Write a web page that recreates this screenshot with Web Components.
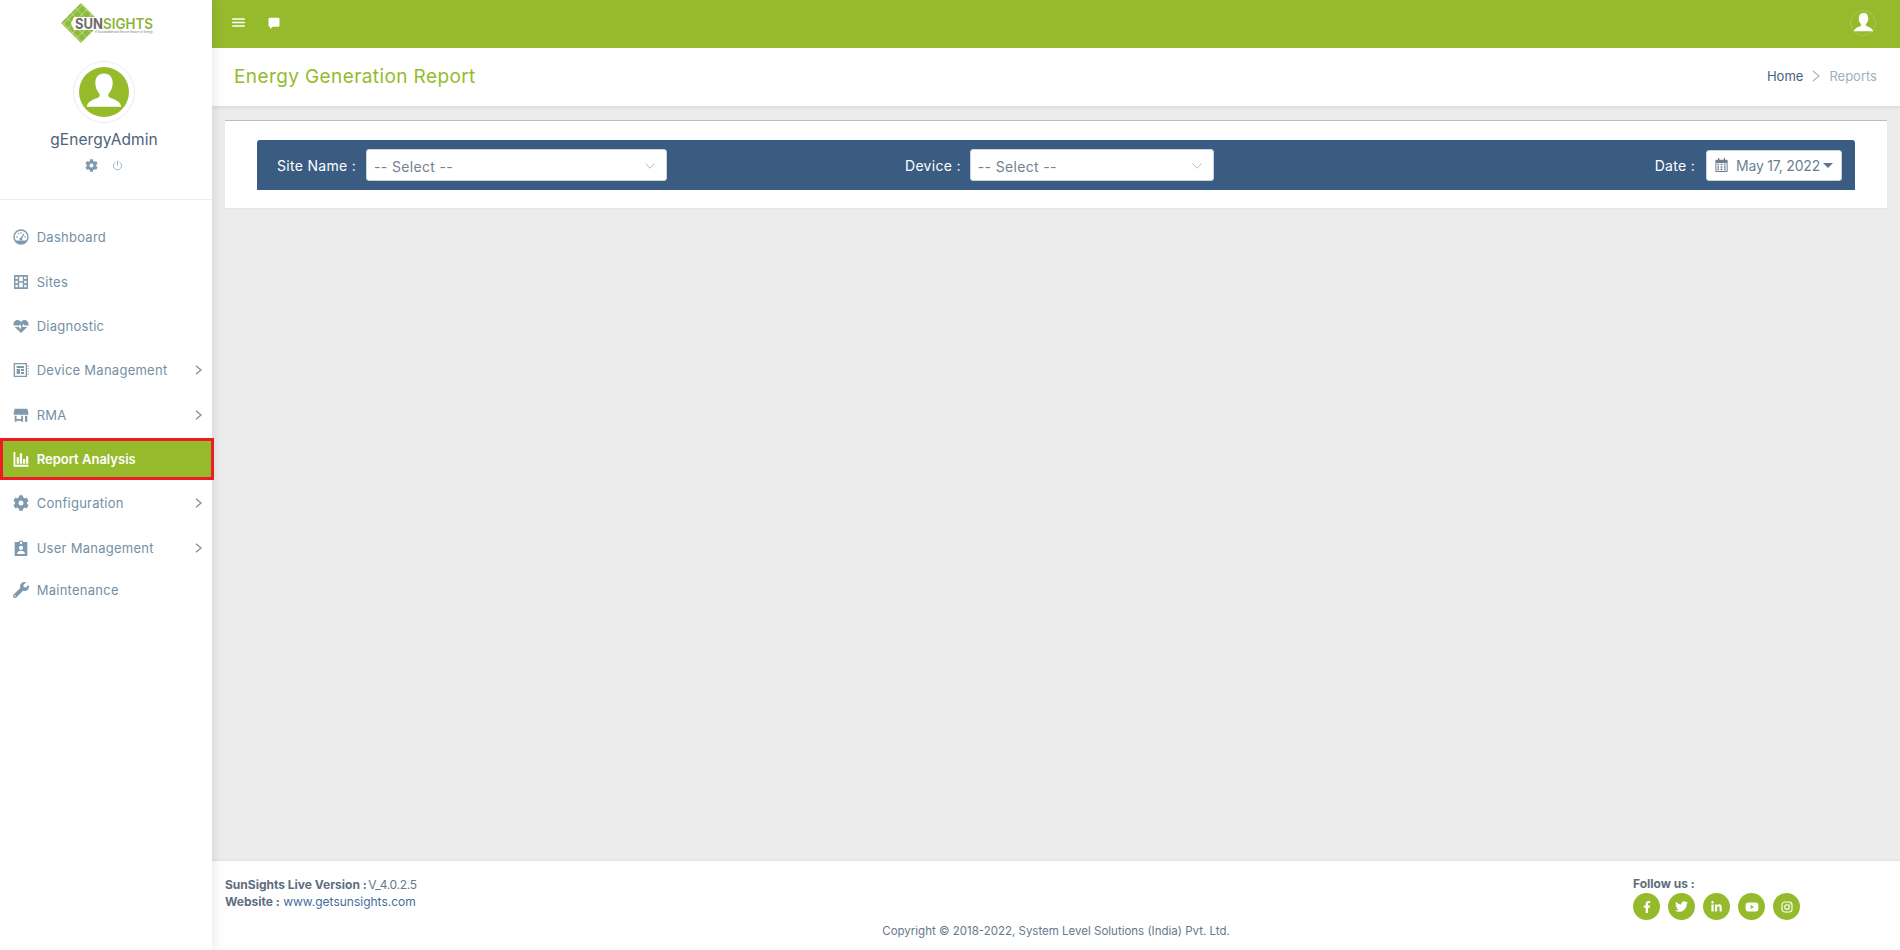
<!DOCTYPE html>
<html lang="en"><head><meta charset="utf-8"><title>Energy Generation Report</title>
<style>
html,body{margin:0;height:100%;overflow:hidden}
body{font-family:Inter,"Open Sans","Liberation Sans",sans-serif;background:#ececec;color:#5f7488}
sg-app{height:950px}
</style></head><body>
<sg-app>
  <sg-sidebar slot="side">
    <sg-nav-item icon="gauge">Dashboard</sg-nav-item>
    <sg-nav-item icon="film">Sites</sg-nav-item>
    <sg-nav-item icon="heart">Diagnostic</sg-nav-item>
    <sg-nav-item icon="chip" more>Device Management</sg-nav-item>
    <sg-nav-item icon="store" more>RMA</sg-nav-item>
    <sg-nav-item icon="bars" active>Report Analysis</sg-nav-item>
    <sg-nav-item icon="cog" more>Configuration</sg-nav-item>
    <sg-nav-item icon="badge" more>User Management</sg-nav-item>
    <sg-nav-item icon="wrench" class="last">Maintenance</sg-nav-item>
  </sg-sidebar>
  <sg-topbar></sg-topbar>
  <sg-page-header heading="Energy Generation Report"></sg-page-header>
  <sg-filter-card></sg-filter-card>
  <sg-footer></sg-footer>
</sg-app>
<script>
const P={
cog:['0 0 512 512','<path d="M487.4 315.7l-42.6-24.6c4.3-23.2 4.3-47 0-70.2l42.6-24.6c4.9-2.8 7.1-8.6 5.5-14-11.1-35.6-30-67.8-54.7-94.6-3.8-4.1-10-5.1-14.8-2.3L380.8 110c-17.9-15.4-38.5-27.3-60.8-35.1V25.8c0-5.6-3.9-10.5-9.4-11.7-36.7-8.2-74.3-7.8-109.2 0-5.5 1.2-9.4 6.1-9.4 11.7V75c-22.2 7.9-42.8 19.8-60.8 35.1L88.7 85.5c-4.9-2.8-11-1.9-14.8 2.3-24.7 26.7-43.6 58.9-54.7 94.6-1.7 5.4.6 11.2 5.5 14L67.3 221c-4.3 23.2-4.3 47 0 70.2l-42.6 24.6c-4.9 2.8-7.1 8.6-5.5 14 11.1 35.6 30 67.8 54.7 94.6 3.8 4.1 10 5.1 14.8 2.3l42.6-24.6c17.9 15.4 38.5 27.3 60.8 35.1v49.2c0 5.6 3.9 10.5 9.4 11.7 36.7 8.2 74.3 7.8 109.2 0 5.5-1.2 9.4-6.1 9.4-11.7v-49.2c22.2-7.9 42.8-19.8 60.8-35.1l42.6 24.6c4.9 2.8 11 1.9 14.8-2.3 24.7-26.7 43.6-58.9 54.7-94.6 1.5-5.5-.7-11.3-5.6-14.1zM256 336c-44.1 0-80-35.9-80-80s35.9-80 80-80 80 35.9 80 80-35.9 80-80 80z"/>'],
wrench:['0 0 512 512','<path d="M507.73 109.1c-2.24-9.03-13.54-12.09-20.12-5.51l-74.36 74.36-67.88-11.31-11.31-67.88 74.36-74.36c6.62-6.62 3.43-17.9-5.66-20.16-47.38-11.74-99.55.91-136.58 37.93-39.64 39.64-50.55 97.1-34.05 147.2L18.74 402.76c-24.99 24.99-24.99 65.51 0 90.5 24.99 24.99 65.51 24.99 90.5 0l213.21-213.21c50.12 16.71 107.47 5.68 147.37-34.22 37.07-37.07 49.7-89.32 37.91-136.73zM64 472c-13.25 0-24-10.75-24-24 0-13.26 10.75-24 24-24s24 10.74 24 24c0 13.25-10.75 24-24 24z"/>'],
gauge:['0 0 24 24','<path fill-rule="evenodd" d="M12 .5a11.500 11.500 0 1 0 0 23 11.500 11.500 0 0 0 0-23zm0 2.200a9.300 9.300 0 0 1 9.300 9.300c0 1.900-.6 3.600-1.600 5.200H4.300A9.300 9.300 0 0 1 2.700 12 9.300 9.300 0 0 1 12 2.700z"/><path d="M15.900 6.700l1.400.8-3.500 6.200a2.200 2.200 0 1 1-1.800-1.100zM5 11h2.200v1.800H5zM16.800 11h2.200v1.800h-2.200zM11.100 4.800h1.800v2.200h-1.800zM6.600 6.800l1.300-1.300 1.400 1.500-1.300 1.300z"/>'],
film:['0 0 24 24','<path fill-rule="evenodd" d="M1.500 1.500h21v21h-21zM3.700 4v3.500h3.500V4zm0 6.200v3.600h3.500v-3.600zm0 6.300V20h3.500v-3.500zM16.800 4v3.500h3.500V4zm0 6.200v3.600h3.500v-3.600zm0 6.300V20h3.500v-3.500zM9.300 4v6.800h5.400V4zm0 9.200V20h5.400v-6.800z"/>'],
heart:['0 0 24 24','<path d="M.8 11.200C-.3 5.500 4.400 2 8.600 3.300c1.400.5 2.500 1.400 3.400 2.600.9-1.200 2-2.100 3.400-2.600 4.200-1.300 8.900 2.200 7.800 7.900h-6l-1.500-2.700-2.800 5.300-2.200-4.300-1.100 1.700zM2.500 13.400h5.300l.7-1.100 2.300 4.500 2.800-5.300.7 1.200.8.700h6.300L12 22.500z"/>'],
chip:['0 0 24 24','<path fill-rule="evenodd" d="M1 1.500h20v21H1zM3 3.500v17h16v-17zM22 5h1.500v2H22zM22 9h1.500v2H22zM22 13h1.500v2H22zM22 17h1.500v2H22zM5.500 6h11v3h-11zM5.500 10.500h5V18h-5zM12 10.500h4.500v3H12zM12 15h4.500v3H12z"/>'],
store:['0 0 24 24','<path d="M2.500 2.500h19l1.500 6v3H1v-3zM2.500 13h2.800v5h7v-5h2.800v9h-2.800v-1.500h-7V22H2.500zM18 13h3.500v9H18z"/>'],
bars:['0 0 24 24','<path d="M.8 1.500h2.700v19.200H23.200V23.500H.8zM5.500 9.500h3.400v9.500H5.500zM10.200 3.500h3.400V19h-3.400zM14.900 12h3.400v7h-3.400zM19.500 8h3.400v11h-3.400z"/>'],
badge:['0 0 24 24','<path fill-rule="evenodd" d="M2.500 3h6.500V1h6v2h6.500v21h-19zM10.500 2.500v3.500h3V2.500zM12 8.500a3.200 3.200 0 1 0 0 6.400 3.200 3.200 0 0 0 0-6.400zM6 21h12c0-3-2.200-5-6-5s-6 2-6 5z"/>'],
menu:['0 0 24 24','<path d="M1.500 4h21a1.500 1.500 0 0 1 0 3h-21a1.500 1.500 0 0 1 0-3zm0 6.500h21a1.500 1.500 0 0 1 0 3h-21a1.500 1.500 0 0 1 0-3zm0 6.500h21a1.500 1.500 0 0 1 0 3h-21a1.500 1.500 0 0 1 0-3z"/>'],
chat:['0 0 24 24','<path d="M3.500 1.500h17A2.500 2.500 0 0 1 23 4v13a2.500 2.500 0 0 1-2.500 2.500H10L4 23.500v-4h-.5A2.500 2.500 0 0 1 1 17V4a2.500 2.500 0 0 1 2.500-2.500z"/>'],
user:['0 0 24 24','<path d="M12 1c3.500 0 5.500 2.400 5.500 5.800 0 2.800-1 5.200-2.400 6.600-.5.500-.5 2 .2 2.500 1.500 1 6.700 1.600 7.700 6.100H1c1-4.500 6.200-5.100 7.700-6.100.7-.5.700-2 .2-2.500C7.500 12 6.500 9.600 6.500 6.800 6.500 3.400 8.500 1 12 1z"/>'],
chev:['0 0 7 10','<path d="M1 .8L6 5 1 9.200" fill="none" stroke="currentColor" stroke-width="1.300"/>'],
chevb:['0 0 8 12','<path d="M1 1l6 5-6 5" fill="none" stroke="currentColor" stroke-width="1.100"/>'],
chevthin:['0 0 24 24','<path d="M3 7l9 9.500L21 7" fill="none" stroke="currentColor" stroke-width="1.500"/>'],
cal:['0 0 448 512','<path fill-rule="evenodd" d="M96 0h48v64h160V0h48v64h64a32 32 0 0 1 32 32v384a32 32 0 0 1-32 32H32a32 32 0 0 1-32-32V96a32 32 0 0 1 32-32h64zM36 180v296h376V180zM72 212h64v56H72zm120 0h64v56h-64zm120 0h64v56h-64zM72 300h64v56H72zm120 0h64v56h-64zm120 0h64v56h-64zM72 388h64v56H72zm120 0h64v56h-64zm120 0h64v56h-64z"/>'],
power:['0 0 24 24','<path d="M12 2v10M7 4.800a9 9 0 1 0 10 0" fill="none" stroke="currentColor" stroke-width="2" stroke-linecap="round"/>'],
fb:['0 0 320 512','<path d="M279.140 288l14.220-92.660h-88.910v-60.130c0-25.350 12.420-50.060 52.240-50.060h40.420V6.260S260.430 0 225.360 0c-73.220 0-121.080 44.380-121.080 124.720v70.620H22.890V288h81.390v224h100.170V288z"/>'],
tw:['0 0 512 512','<path d="M459.370 151.716c.325 4.548.325 9.097.325 13.645 0 138.720-105.583 298.558-298.558 298.558-59.452 0-114.680-17.219-161.137-47.106 8.447.974 16.568 1.299 25.340 1.299 49.055 0 94.213-16.568 130.274-44.832-46.132-.975-84.792-31.188-98.112-72.772 6.498.974 12.995 1.624 19.818 1.624 9.421 0 18.843-1.300 27.614-3.573-48.081-9.747-84.143-51.980-84.143-102.985v-1.299c13.969 7.797 30.214 12.670 47.431 13.319-28.264-18.843-46.781-51.005-46.781-87.391 0-19.492 5.197-37.360 14.294-52.954 51.655 63.675 129.300 105.258 216.365 109.807-1.624-7.797-2.599-15.918-2.599-24.040 0-57.828 46.782-104.934 104.934-104.934 30.213 0 57.502 12.670 76.670 33.137 23.715-4.548 46.456-13.320 66.599-25.340-7.798 24.366-24.366 44.833-46.132 57.827 21.117-2.273 41.584-8.122 60.426-16.243-14.292 20.791-32.161 39.308-52.628 54.253z"/>'],
li:['0 0 448 512','<path d="M100.280 448H7.400V148.900h92.880zM53.790 108.100C24.090 108.100 0 83.500 0 53.800a53.790 53.790 0 0 1 107.580 0c0 29.700-24.100 54.300-53.790 54.300zM447.900 448h-92.680V302.400c0-34.700-.7-79.200-48.290-79.200-48.290 0-55.690 37.700-55.690 76.700V448h-92.780V148.900h89.080v40.800h1.300c12.400-23.500 42.690-48.300 87.880-48.300 94 0 111.280 61.900 111.280 142.300V448z"/>'],
yt:['0 0 576 512','<path d="M549.655 124.083c-6.281-23.650-24.787-42.276-48.284-48.597C458.781 64 288 64 288 64S117.220 64 74.629 75.486c-23.497 6.322-42.003 24.947-48.284 48.597-11.412 42.867-11.412 132.305-11.412 132.305s0 89.438 11.412 132.305c6.281 23.650 24.787 41.500 48.284 47.821C117.220 448 288 448 288 448s170.780 0 213.371-11.486c23.497-6.321 42.003-24.171 48.284-47.821 11.412-42.867 11.412-132.305 11.412-132.305s0-89.438-11.412-132.305zm-317.510 213.508V175.185l142.739 81.205-142.739 81.201z"/>'],
ig:['0 0 24 24','<rect x="2" y="2" width="20" height="20" rx="5.500" fill="none" stroke="currentColor" stroke-width="2.200"/><circle cx="12" cy="12" r="4.600" fill="none" stroke="currentColor" stroke-width="2.200"/><circle cx="17.800" cy="6.200" r="1.400"/>']
};
function icon(n,w,h){const p=P[n];return `<svg xmlns="http://www.w3.org/2000/svg" viewBox="${p[0]}" width="${w}" height="${h||w}" fill="currentColor" style="display:block;flex:none">${p[1]}</svg>`}
function def(name,css,html){
  customElements.define(name,class extends HTMLElement{
    connectedCallback(){
      if(this.shadowRoot)return;
      const r=this.attachShadow({mode:'open'});
      r.innerHTML=`<style>${css}</style>`+(typeof html==='function'?html(this):html);
    }
  });
}
def('sg-app',`:host{display:grid;grid-template-columns:212px 1fr;grid-template-rows:48px 58px 1fr 89px;height:950px}
::slotted(sg-sidebar){grid-row:1/5;grid-column:1}`,`<slot name="side"></slot><slot></slot>`);
def('sg-logo',`:host{display:block;width:100px;height:44px}
svg{display:block}`,`<svg width="100" height="44" viewBox="0 0 100 44" xmlns="http://www.w3.org/2000/svg" aria-label="SunSights">
<defs><pattern id="g" width="6.500" height="6.500" patternUnits="userSpaceOnUse" patternTransform="rotate(45)"><rect width="6.500" height="6.500" fill="#8dbb3c"/><path d="M0 0H6.500M0 0V6.500" stroke="#dbe8bc" stroke-width="1"/></pattern></defs>
<path d="M22 3L42 23 22 43 2 23z" fill="url(#g)"/>
<path d="M15 17H44V30H15L12 23.500z" fill="#fff"/>
<text x="16" y="29" font-family="Inter,sans-serif" font-size="14.500" font-weight="700" fill="#6d6a6a" textLength="28" lengthAdjust="spacingAndGlyphs">SUN</text>
<text x="44" y="29" font-family="Inter,sans-serif" font-size="14.500" font-weight="600" fill="#8ab53a" textLength="50" lengthAdjust="spacingAndGlyphs">SIGHTS</text>
<text x="36" y="33" font-family="Inter,sans-serif" font-size="2.800" fill="#777" textLength="58" lengthAdjust="spacingAndGlyphs">A Sustainable and Secure Source of Energy</text>
</svg>`);
def('sg-sidebar',`:host{display:flex;flex-direction:column;background:#fff;height:950px;position:relative;z-index:2;box-shadow:4px 0 8px rgba(0,0,0,.07)}
.top{height:199px;border-bottom:1px solid #ececec;display:flex;flex-direction:column;align-items:center;padding-right:4px}
sg-logo{align-self:flex-start;margin-left:59px}
.av{width:60px;height:60px;border:1px solid #ececec;border-radius:50%;margin-top:17px;display:flex;align-items:center;justify-content:center;background:#fff}
.av i{width:50px;height:50px;border-radius:50%;background:#95bb2d;display:flex;justify-content:center;color:#fff;align-items:flex-start}
.av svg{margin-top:5px}
.name{font-size:15.500px;line-height:20px;color:#4c6278;margin-top:7px;letter-spacing:.1px}
.act{display:flex;gap:14px;align-items:center;color:#7d9ab0;margin-top:9px}
nav{display:flex;flex-direction:column;padding-top:15px}`,
`<div class="top"><sg-logo></sg-logo>
<div class="av"><i>${icon('user',38,38)}</i></div>
<div class="name">gEnergyAdmin</div>
<div class="act">${icon('cog',13)}<span style="color:#9db2c2">${icon('power',11)}</span></div></div>
<nav><slot></slot></nav>`);
def('sg-nav-item',`:host{display:flex;align-items:center;height:44.400px;box-sizing:border-box;padding:0 10.500px 0 12.500px;font-size:13px;color:#738fa6;position:relative;letter-spacing:.26px}
:host(.last){margin-top:-2px}
.ic{width:16px;display:flex;justify-content:center;margin-right:8.200px;color:#7f99ad;flex:none}
.t{flex:1}
.ch{color:#7f8f9c}
:host([active]){color:#fff;font-weight:600;background:#95bb2d;height:42px;margin:1px -2px 1px 0;outline:3px solid #ed1c24;outline-offset:-3px;letter-spacing:0}
:host([active]) .ic{color:#fff}`,
el=>`<span class="ic">${icon(el.getAttribute('icon'),16)}</span><span class="t"><slot></slot></span>${el.hasAttribute('more')?`<span class="ch">${icon('chev',7,10)}</span>`:''}`);
def('sg-topbar',`:host{display:flex;align-items:center;background:#95bb2d;color:#fff;padding:0 25px 3px 20px;grid-column:2}
.l{display:flex;gap:23px;align-items:center;flex:1}
.u{width:24px;height:24px;display:flex;align-items:center;justify-content:center;border:1px solid rgba(255,255,255,.18);border-radius:50%;margin-right:-1px}`,
`<div class="l">${icon('menu',13)}${icon('chat',12)}</div><div class="u">${icon('user',21)}</div>`);
def('sg-page-header',`:host{display:flex;align-items:center;background:#fff;padding:0 23px 2px 22px;box-shadow:0 2px 3px rgba(0,0,0,.07);position:relative;z-index:1;grid-column:2}
h1{flex:1;margin:0;font-size:19px;font-weight:400;color:#95bb2d;letter-spacing:.4px}
nav{display:flex;align-items:center;gap:9px;font-size:13px;color:#9fb0bd}
a{color:#3f5f84}`,
el=>`<h1>${el.getAttribute('heading')}</h1><nav><a>Home</a><span style="color:#a9b5bf">${icon('chevb',8,12)}</span><span>Reports</span></nav>`);
def('sg-filter-card',`:host{display:block;padding:14px 13px;grid-column:2}
.card{box-sizing:border-box;background:#fff;border-top:1px solid #bdbdbd;height:88px;padding:19px 32px 0;box-shadow:0 1px 2px rgba(0,0,0,.04)}
.bar{background:#3a5c82;height:50px;border-radius:3px 3px 0 0;display:grid;grid-template-columns:648px 308px 1fr;align-items:center;color:#fff;font-size:14px}
.f{display:flex;align-items:center}
.f label{letter-spacing:.3px;white-space:nowrap;flex:none}
.a{padding-left:20px}.a label{margin-right:10px}
.a sg-select{width:301px}
.b label{margin-right:9px}.b sg-select{width:244px;flex:none}
.c{justify-content:flex-end;padding-right:13px}.c label{margin-right:11px}`,
`<div class="card"><div class="bar">
<div class="f a"><label>Site Name :</label><sg-select>-- Select --</sg-select></div>
<div class="f b"><label>Device :</label><sg-select>-- Select --</sg-select></div>
<div class="f c"><label>Date :</label><sg-date>May 17, 2022</sg-date></div>
</div></div>`);
def('sg-select',`:host{display:flex;align-items:center;height:32px;box-sizing:border-box;background:#fff;border:1px solid #ccd3da;border-radius:3px;color:#74808c;font-size:14px;letter-spacing:.35px;padding:2px 10px 0 7px}
span{flex:1}i{color:#9aa6b0;font-style:normal}`,
`<span><slot></slot></span><i>${icon('chevthin',12)}</i>`);
def('sg-date',`:host{display:flex;align-items:center;width:136px;height:31px;box-sizing:border-box;background:#fff;border:1px solid #ccd3da;border-radius:3px;color:#6c7f92;font-size:14px;letter-spacing:-.2px;padding:0 8px}
.c{margin-right:8px;color:#6c7f92}span{white-space:nowrap;flex:1}
.t{width:0;height:0;border:5px solid transparent;border-top-color:#63758a;border-bottom:0}`,
`<div class="c">${icon('cal',13,14)}</div><span><slot></slot></span><div class="t"></div>`);
def('sg-social',`:host{display:flex;width:27px;height:27px;border-radius:50%;background:#95bb2d;color:#fff;align-items:center;justify-content:center}`,
el=>{const n=el.getAttribute('name');const s={fb:[8,12],tw:[13,13],li:[11,12],yt:[14,12],ig:[12,12]}[n];return icon(n,s[0],s[1])});
def('sg-footer',`:host{display:block;background:#fff;position:relative;grid-column:2;box-shadow:0 -1px 2px rgba(0,0,0,.05);font-size:12px;color:#66788a;height:89px;box-sizing:border-box;padding:15px 13px 0}
.row{display:flex;justify-content:space-between}
.info{line-height:17px}
b{font-weight:700;color:#5d6d7d}
a{color:#3f6e9c}
.v{letter-spacing:-.3px;margin-left:-2px}
.f{width:254px}
.f b{display:block;line-height:16px}
.s{display:flex;gap:8px;margin-top:1px}
.copy{text-align:center;font-size:11.500px;line-height:16px;margin-top:3px;color:#66788a}`,
`<div class="row"><div class="info"><div><b>SunSights Live Version :</b> <span class="v">V_4.0.2.5</span></div><div><b>Website :</b> <a>www.getsunsights.com</a></div></div>
<div class="f"><b>Follow us :</b><div class="s"><sg-social name="fb"></sg-social><sg-social name="tw"></sg-social><sg-social name="li"></sg-social><sg-social name="yt"></sg-social><sg-social name="ig"></sg-social></div></div></div>
<div class="copy">Copyright © 2018-2022, System Level Solutions (India) Pvt. Ltd.</div>`);
</script>
</body></html>
